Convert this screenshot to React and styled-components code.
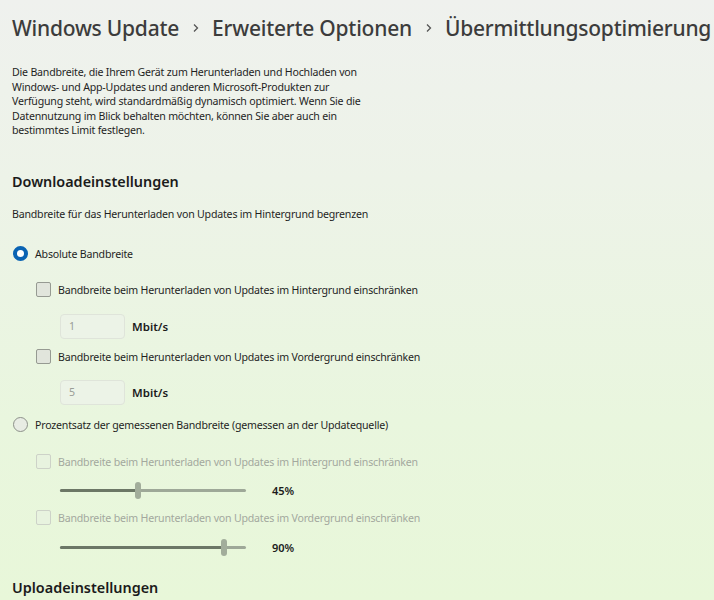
import React from 'react';
import styled, { createGlobalStyle } from 'styled-components';

const font = `"Noto Sans", "Open Sans", "Liberation Sans", sans-serif`;

const GlobalStyle = createGlobalStyle`
    html, body {
        margin: 0;
        padding: 0;
    }
    body {
        font-family: ${font};
        background: #eef1ec;
    }
`;

const Page = styled.div`
    width: 714px;
    height: 600px;
    overflow: hidden;
    box-sizing: border-box;
    padding: 0 0 0 12px;
    background: linear-gradient(180deg, #eff1ee 0%, #edf3e8 30%, #e9f6de 70%, #e8f7d9 100%);
    display: flex;
    flex-direction: column;
`;

const Breadcrumb = styled.div`
    display: flex;
    align-items: center;
    height: 56px;
    white-space: nowrap;
    font-size: 21px;
    font-weight: 500;
    color: #3c3c3c;
    letter-spacing: -0.23px;
`;

const Chevron = styled.span`
    display: inline-flex;
    margin: 0 12px 0 13px;
`;

const Description = styled.p`
    margin: 9px 0 0 0;
    width: 366px;
    font-size: 10.6px;
    letter-spacing: -0.2px;
    line-height: 14.5px;
    color: #1f1f1f;
`;

const SectionTitle = styled.h2`
    margin: ${({ $mt }) => $mt}px 0 0 0;
    font-size: 14.4px;
    line-height: 22px;
    font-weight: 600;
    color: #1b1b1b;
`;

const Text = styled.div`
    margin-top: ${({ $mt }) => $mt}px;
    font-size: 10.6px;
    letter-spacing: -0.2px;
    line-height: 16px;
    color: #1f1f1f;
`;

const Row = styled.div`
    display: flex;
    align-items: center;
    height: ${({ $h }) => $h || 24}px;
    margin-top: ${({ $mt }) => $mt}px;
    padding-left: ${({ $indent }) => $indent || 0}px;
    gap: ${({ $gap }) => ($gap === undefined ? 7 : $gap)}px;
    font-size: 10.6px;
    letter-spacing: -0.2px;
    white-space: nowrap;
    color: ${({ $disabled }) => ($disabled ? '#a3a89e' : '#1f1f1f')};
`;

const Radio = styled.span`
    box-sizing: border-box;
    width: 15px;
    height: 15px;
    border-radius: 50%;
    flex-shrink: 0;
    ${({ $checked }) =>
        $checked
            ? `border: 4.5px solid #0a63b3; background: #fff;`
            : `border: 1px solid #8d918a; background: #e8ece4;`}
`;

const Checkbox = styled.span`
    box-sizing: border-box;
    width: 15px;
    height: 15px;
    border-radius: 2px;
    flex-shrink: 0;
    border: 1px solid ${({ $disabled }) => ($disabled ? '#cdd2c8' : '#969a92')};
    background: ${({ $disabled }) => ($disabled ? '#e8f3df' : '#e1e5dc')};
`;

const NumberBox = styled.div`
    box-sizing: border-box;
    width: 65px;
    height: 25px;
    border: 1px solid #dfe4da;
    border-radius: 4px;
    background: #ecf3e7;
    padding-left: 8px;
    display: flex;
    align-items: center;
    font-size: 10.6px;
    color: #9a9d97;
`;

const Unit = styled.span`
    font-size: 11.5px;
    font-weight: 600;
    letter-spacing: 0;
    color: #1b1b1b;
`;

const Track = styled.div`
    position: relative;
    width: 186px;
    height: 3px;
    border-radius: 2px;
    background: #9ea898;
`;

const TrackFill = styled.div`
    height: 100%;
    border-radius: 2px;
    background: #6c7766;
`;

const Thumb = styled.div`
    position: absolute;
    top: -7px;
    width: 6px;
    height: 17px;
    margin-left: -3px;
    border-radius: 3px;
    background: #a2ad9b;
`;

const Percent = styled.span`
    margin-left: 26px;
    font-size: 11px;
    font-weight: 600;
    letter-spacing: 0;
    color: #1b1b1b;
`;

const Slider = ({ value }) => (
    <Track>
        <TrackFill style={{ width: `${value}%` }} />
        <Thumb style={{ left: `${value}%` }} />
    </Track>
);

const ChevronIcon = () => (
    <svg width="8" height="10" viewBox="0 0 8 10">
        <path d="M2 1.5 L5.5 5 L2 8.5" fill="none" stroke="#555" strokeWidth="1.3" />
    </svg>
);

export default function App() {
    return (
        <>
            <GlobalStyle />
            <Page>
                <Breadcrumb>
                    <span>Windows Update</span>
                    <Chevron><ChevronIcon /></Chevron>
                    <span>Erweiterte Optionen</span>
                    <Chevron><ChevronIcon /></Chevron>
                    <span>Übermittlungsoptimierung</span>
                </Breadcrumb>
                <Description>
                    Die Bandbreite, die Ihrem Gerät zum Herunterladen und Hochladen von
                    Windows- und App-Updates und anderen Microsoft-Produkten zur
                    Verfügung steht, wird standardmäßig dynamisch optimiert. Wenn Sie die
                    Datennutzung im Blick behalten möchten, können Sie aber auch ein
                    bestimmtes Limit festlegen.
                </Description>
                <SectionTitle $mt={33}>Downloadeinstellungen</SectionTitle>
                <Text $mt={13}>Bandbreite für das Herunterladen von Updates im Hintergrund begrenzen</Text>

                <Row $mt={20} $indent={1}>
                    <Radio $checked />
                    Absolute Bandbreite
                </Row>
                <Row $mt={12} $indent={24}>
                    <Checkbox />
                    Bandbreite beim Herunterladen von Updates im Hintergrund einschränken
                </Row>
                <Row $mt={12} $h={25} $indent={48} $gap={7}>
                    <NumberBox>1</NumberBox>
                    <Unit>Mbit/s</Unit>
                </Row>
                <Row $mt={6} $indent={24}>
                    <Checkbox />
                    Bandbreite beim Herunterladen von Updates im Vordergrund einschränken
                </Row>
                <Row $mt={11} $h={25} $indent={48} $gap={7}>
                    <NumberBox>5</NumberBox>
                    <Unit>Mbit/s</Unit>
                </Row>
                <Row $mt={8} $indent={1}>
                    <Radio />
                    Prozentsatz der gemessenen Bandbreite (gemessen an der Updatequelle)
                </Row>
                <Row $mt={13} $indent={24} $disabled>
                    <Checkbox $disabled />
                    Bandbreite beim Herunterladen von Updates im Hintergrund einschränken
                </Row>
                <Row $mt={7} $h={20} $indent={48} $gap={0}>
                    <Slider value={42} />
                    <Percent>45%</Percent>
                </Row>
                <Row $mt={5} $indent={24} $disabled>
                    <Checkbox $disabled />
                    Bandbreite beim Herunterladen von Updates im Vordergrund einschränken
                </Row>
                <Row $mt={8} $h={20} $indent={48} $gap={0}>
                    <Slider value={88} />
                    <Percent>90%</Percent>
                </Row>
                <SectionTitle $mt={19}>Uploadeinstellungen</SectionTitle>
            </Page>
        </>
    );
}
